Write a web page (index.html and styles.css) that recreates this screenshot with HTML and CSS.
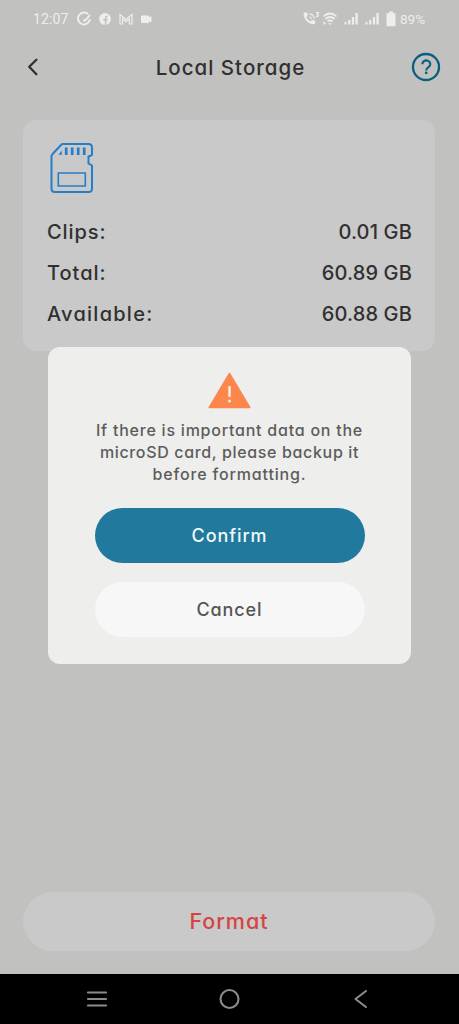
FILE: index.html
```html
<!DOCTYPE html>
<html lang="en">
<head>
<meta charset="utf-8">
<title>Local Storage</title>
<link rel="stylesheet" href="styles.css">
</head>
<body>
<div class="screen">
  <div class="status">
    <span class="clock">12:07</span>
    <svg class="status-left" width="78" height="16" viewBox="0 0 78 16" fill="none" stroke="#eeeeec">
      <path d="M11.300 3.200A6 6 0 1 0 13 8.200M6.500 8.800l1.200 1.200 5.300-5.800" stroke-width="1.900"/>
      <circle cx="28" cy="8" r="5.900" fill="#eeeeec" stroke="none"/>
      <path d="M28.600 14V7.200q0-1.900 2-1.900M26.200 8.800h4.500" stroke="#c1c1bf" stroke-width="1.500"/>
      <path d="M43 13V3.600l6 4.800 6-4.800V13h-2.600V7.800L49 10.600l-3.400-2.800V13z" stroke-width="1.200"/>
      <path d="M64.500 5h7v2l2.500-1.300v5l-2.500-1.200V11.500h-7z" fill="#eeeeec" stroke-width="1" stroke-linejoin="round"/>
    </svg>
    <svg class="status-right" width="94" height="18" viewBox="0 0 94 18" fill="#eeeeec">
      <path d="M.5 3.600q0-1.200 1.200-1.200h2q.7 0 .8.800l.3 2.300-1.600 1.800q1.500 2.900 4.200 4.100l1.600-1.500 2.300.4q.8.100.8.900v2q0 1-1 1Q6 14 3.200 10.700.5 7.500.5 3.600z"/>
      <path d="M6.500 6.800q1.700.5 2 2M6.500 3.800q4 .5 4.900 4.800M13 2.500h2.400l-1.300 1.800q1.400.2 1.200 1.400-.4 1-2.300.5" fill="none" stroke="#eeeeec" stroke-width="1.200"/>
      <path d="M20.500 6.500q6.500-6 13 0M22.500 9q4.500-4 9 0M24.500 11.500q2.500-2.400 5 0" fill="none" stroke="#eeeeec" stroke-width="1.700"/>
      <path d="M25 13.200h4L27 15zM20.500 11l2.500 2.200-2.500 1.800z"/>
      <path d="M41.500 12h2v2.500h-2zM45.200 10h2.200v4.500h-2.200zM48.900 7h2.200v7.500h-2.200zM52.400 3h2.400v11.500h-2.400z"/>
      <path d="M62.500 12h2v2.500h-2zM66.200 10h2.200v4.500h-2.200zM69.900 7h2.200v7.500h-2.200zM73.400 3h2.400v11.500h-2.400z"/>
      <path d="M86 1.500h4v1.700h2.500v13h-9v-13H86z"/>
    </svg>
    <span class="battery">89%</span>
  </div>

  <header class="header">
    <svg width="16" height="20" viewBox="0 0 16 20" fill="none" stroke="#303030" stroke-width="2.300" stroke-linecap="round" stroke-linejoin="round"><path d="M11.400 2.800 4.200 9.800l7.200 7.400"/></svg>
    <h1 class="title">Local Storage</h1>
    <svg width="30" height="30" viewBox="0 0 30 30" fill="none" stroke="#085f80"><circle cx="15" cy="15" r="13" stroke-width="2.300"/><path d="M11.300 12.200a4 3.700 0 1 1 6.200 3c-1.700 1.100-2.300 1.700-2.300 3.300" stroke-width="2.100"/><circle cx="15.200" cy="20.800" r="1.400" fill="#085f80" stroke="none"/></svg>
  </header>

  <section class="card">
    <svg class="sd" width="44" height="52" viewBox="0 0 44 52" fill="none" stroke="#247ecb" stroke-width="2">
      <path d="M13 2H38.500Q42 2 42 5.500V13l-3.500 1.500v7L42 23.500V46.500Q42 50 38.500 50H5Q1.500 50 1.500 46.500V14.500Q1.500 13 2.600 12L11 3Q12 2 13 2z" stroke-linejoin="round"/>
      <path d="M8.500 12.800 11.800 8.500V12.800z" fill="#247ecb" stroke="none"/>
      <path d="M16.200 5.500V13M22.200 5.500V13M28.200 5.500V13M34.200 5.500V13" stroke-width="2.700"/>
      <path d="M8.300 31h27v13h-27z" stroke-width="1.600"/>
    </svg>
    <div class="row"><span class="k1">Clips:</span><span class="value">0.01 GB</span></div>
    <div class="row"><span class="k2">Total:</span><span class="value">60.89 GB</span></div>
    <div class="row"><span class="k3">Available:</span><span class="value">60.88 GB</span></div>
  </section>

  <button class="format">Format</button>

  <nav class="nav">
    <svg width="22" height="20" viewBox="0 0 22 20" stroke="#8c8c8c" stroke-width="2.200" stroke-linecap="round"><path d="M2 3.500h18M2 10h18M2 16.500h18"/></svg>
    <svg width="22" height="22" viewBox="0 0 22 22" fill="none" stroke="#8c8c8c" stroke-width="2.100"><circle cx="11.500" cy="11" r="9"/></svg>
    <svg width="22" height="22" viewBox="0 0 22 22" fill="none" stroke="#8c8c8c" stroke-width="2.100" stroke-linecap="round" stroke-linejoin="round"><path d="M16 3 5.500 11 16 19"/></svg>
  </nav>

  <div class="dialog" role="dialog">
    <svg width="44" height="38" viewBox="0 0 44 38"><path d="M21.500 2.300 41.800 36.500H1.200z" fill="#fb874c" stroke="#fb874c" stroke-width="1.500" stroke-linejoin="round"/><path d="M21.500 15.200v10.600" stroke="#f6f0ea" stroke-width="2.400"/><circle cx="21.500" cy="30" r="1.500" fill="#f6f0ea"/></svg>
    <p class="message"><span class="m1">If there is important data on the</span><br><span class="m2">microSD card, please backup it</span><br><span class="m3">before formatting.</span></p>
    <button class="btn confirm">Confirm</button>
    <button class="btn cancel">Cancel</button>
  </div>
</div>
</body>
</html>
```

FILE: styles.css
```css
* { box-sizing: border-box; }
body {
  margin: 0;
  font-family: Inter, "Liberation Sans", sans-serif;
  font-weight: 500;
  font-feature-settings: "cv11" 1;
}
button { border: 0; padding: 0; font: inherit; font-feature-settings: inherit; }
svg { display: block; flex: none; }
.screen {
  position: relative;
  display: flex;
  flex-direction: column;
  height: 1024px;
  background: #c1c1bf;
  overflow: hidden;
}
.status {
  display: flex;
  align-items: center;
  height: 38px;
  padding: 0 32px 0 33px;
  color: #eeeeec;
  font-family: Roboto, sans-serif;
  font-size: 14px;
  font-weight: 400;
}
.clock { width: 36px; letter-spacing: .1px; }
.status-left { margin-left: 8px; }
.status-right { margin-left: auto; }
.battery { width: 27px; margin-left: 3px; font-size: 13.500px; }
.header {
  display: flex;
  justify-content: space-between;
  align-items: center;
  height: 58px;
  padding: 0 18px 0 25px;
}
.title {
  margin: 0 0 0 9px;
  color: #303030;
  font-size: 20.500px;
  font-weight: 500;
  letter-spacing: 1px;
}
.card {
  height: 231px;
  margin: 24px 24px 0 23px;
  padding: 22px 23px 0 24px;
  border-radius: 13px;
  background: #c9c9c9;
  color: #303030;
  font-size: 20px;
}
.sd { margin-left: 3px; margin-bottom: 17px; }
.row {
  display: flex;
  justify-content: space-between;
  align-items: center;
  height: 41px;
}
.k1 { letter-spacing: .9px; }
.k2 { letter-spacing: 1px; }
.k3 { letter-spacing: 1.250px; }
.value { letter-spacing: .150px; }
.format {
  height: 59px;
  margin: auto 24px 23px 23px;
  padding-bottom: 2px;
  border-radius: 30px;
  background: #c9c9c9;
  color: #d64343;
  font-size: 21.500px;
  letter-spacing: 1px;
}
.nav {
  display: flex;
  justify-content: space-between;
  align-items: center;
  height: 50px;
  padding: 0 87px 0 86px;
  background: #000;
}
.dialog {
  position: absolute;
  left: 48px;
  top: 347px;
  width: 363px;
  height: 317px;
  padding: 24px 46px 0;
  display: flex;
  flex-direction: column;
  align-items: center;
  border-radius: 12px;
  background: #eeeeec;
}
.message {
  margin: 10px 0 23px;
  color: #5c5c5c;
  font-size: 16px;
  line-height: 22px;
  text-align: center;
  white-space: nowrap;
}
.m1 { letter-spacing: .770px; }
.m2 { letter-spacing: .650px; }
.m3 { letter-spacing: .850px; }
.btn {
  width: 270px;
  height: 55px;
  border-radius: 28px;
  font-size: 18px;
  letter-spacing: .9px;
}
.confirm { background: #217a9e; color: #f3f7f8; }
.cancel { margin-top: 19px; background: #f7f7f7; color: #555; }
```
